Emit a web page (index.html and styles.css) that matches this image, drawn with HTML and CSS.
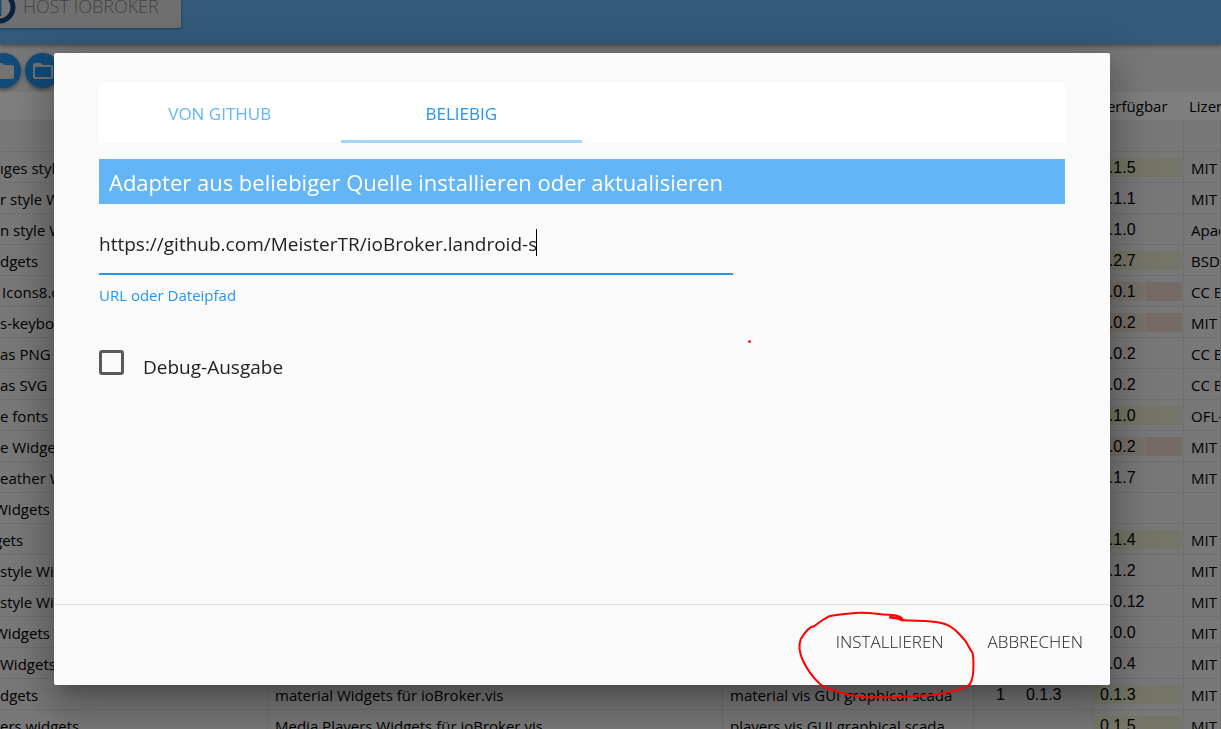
FILE: index.html
```html
<!DOCTYPE html>
<html lang="de">
<head>
<meta charset="utf-8">
<title>ioBroker – Adapter</title>
<link rel="stylesheet" href="styles.css">
</head>
<body>
<div class="page">
  <header class="topbar">
    <button class="host" type="button">
      <svg class="host-logo" viewBox="0 0 18 28" width="18" height="28" aria-hidden="true">
        <circle cx="-1" cy="7" r="14" fill="#e8eef2" stroke="#164478" stroke-width="5"/>
        <path d="M0.5 -2V16" stroke="#3f9bd0" stroke-width="2"/>
      </svg>
      <span>HOST IOBROKER</span>
    </button>
  </header>
  <div class="toolbar">
    <button class="round" type="button" aria-label="Ordner schließen">
      <svg viewBox="0 0 24 24" width="24" height="24"><path fill="#e6e6e6" d="M10 4H4c-1.100 0-2 .9-2 2v12c0 1.100.9 2 2 2h16c1.100 0 2-.9 2-2V8c0-1.100-.9-2-2-2h-8z"/></svg>
    </button>
    <button class="round" type="button" aria-label="Ordner öffnen">
      <svg viewBox="0 0 24 24" width="24" height="24"><path fill="#e6e6e6" d="M20 6h-8l-2-2H4c-1.100 0-2 .9-2 2v12c0 1.100.9 2 2 2h16c1.100 0 2-.9 2-2V8c0-1.100-.9-2-2-2zm0 12H4V8h16z"/></svg>
    </button>
  </div>
  <table class="adapters">
    <colgroup><col class="c-name"><col class="c-desc"><col class="c-keys"><col class="c-inst"><col class="c-avail"><col class="c-lic"></colgroup>
    <thead><tr><th></th><th></th><th></th><th></th><th>Verfügbar</th><th>Lizenz</th></tr></thead>
    <tbody>
      <tr class="group"><td></td><td></td><td></td><td></td><td></td><td></td></tr>
      <tr><td>ıges style</td><td></td><td></td><td></td><td class="ver new"><span>0.1.5</span></td><td>MIT</td></tr>
      <tr><td>r style W</td><td></td><td></td><td></td><td class="ver"><span>0.1.1</span></td><td>MIT</td></tr>
      <tr><td>n style W</td><td></td><td></td><td></td><td class="ver"><span>0.1.0</span></td><td>Apache</td></tr>
      <tr><td>dgets</td><td></td><td></td><td></td><td class="ver new"><span>0.2.7</span></td><td>BSD</td></tr>
      <tr><td class="cut">I Icons8.c</td><td></td><td></td><td></td><td class="ver old"><span>0.0.1</span></td><td>CC BY</td></tr>
      <tr><td>s-keyboa</td><td></td><td></td><td></td><td class="ver old"><span>0.0.2</span></td><td>MIT</td></tr>
      <tr><td>as PNG</td><td></td><td></td><td></td><td class="ver"><span>0.0.2</span></td><td>CC BY</td></tr>
      <tr><td>as SVG</td><td></td><td></td><td></td><td class="ver"><span>0.0.2</span></td><td>CC BY</td></tr>
      <tr><td>e fonts</td><td></td><td></td><td></td><td class="ver new"><span>0.1.0</span></td><td>OFL-1</td></tr>
      <tr><td>e Widget</td><td></td><td></td><td></td><td class="ver old"><span>0.0.2</span></td><td>MIT</td></tr>
      <tr><td>eather W</td><td></td><td></td><td></td><td class="ver"><span>0.1.7</span></td><td>MIT</td></tr>
      <tr><td class="cut">Widgets</td><td></td><td></td><td></td><td></td><td></td></tr>
      <tr><td class="cut">gets</td><td></td><td></td><td></td><td class="ver new"><span>0.1.4</span></td><td>MIT</td></tr>
      <tr><td>style Wi</td><td></td><td></td><td></td><td class="ver"><span>0.1.2</span></td><td>MIT</td></tr>
      <tr><td>style Wid</td><td></td><td></td><td></td><td class="ver"><span>0.0.12</span></td><td>MIT</td></tr>
      <tr><td class="cut">Widgets</td><td></td><td></td><td></td><td class="ver"><span>0.0.0</span></td><td>MIT</td></tr>
      <tr><td>Widgets</td><td></td><td></td><td></td><td class="ver"><span>0.0.4</span></td><td>MIT</td></tr>
      <tr><td>dgets</td><td>material Widgets für ioBroker.vis</td><td>material vis GUI graphical scada</td><td class="inst"><span class="count">1</span><span>0.1.3</span></td><td class="ver new"><span>0.1.3</span></td><td>MIT</td></tr>
      <tr><td>ers widgets</td><td>Media Players Widgets für ioBroker.vis</td><td>players vis GUI graphical scada</td><td></td><td class="ver new"><span>0.1.5</span></td><td>MIT</td></tr>
    </tbody>
  </table>
</div>
<div class="overlay">
  <form class="modal" role="dialog" aria-labelledby="dlg-title">
    <div class="content">
      <nav class="tabs">
        <a href="#github">VON GITHUB</a>
        <a href="#custom" class="active">BELIEBIG</a>
      </nav>
      <h2 id="dlg-title">Adapter aus beliebiger Quelle installieren oder aktualisieren</h2>
      <div class="field">
        <input id="url" type="text" spellcheck="false" value="https://github.com/MeisterTR/ioBroker.landroid-s">
        <i class="caret"></i>
        <label for="url">URL oder Dateipfad</label>
      </div>
      <div class="check">
        <input id="debug" type="checkbox">
        <label for="debug">Debug-Ausgabe</label>
      </div>
    </div>
    <footer class="actions">
      <button type="button">INSTALLIEREN</button>
      <button type="button">ABBRECHEN</button>
    </footer>
    <i class="dot"></i>
    <svg class="scribble" viewBox="0 0 531 270" width="177" height="90" aria-hidden="true">
      <path d="M317 27C310 20 300 16 285 15C270 14 262 14 245 12C220 9 195 8 175 9C155 11 120 14 96 19C75 29 63 40 53 48C37 49 22 69 11 88C5 105 8 130 17 150C28 174 42 197 67 220C82 235 95 236 115 243C135 250 160 256 185 260C225 263 270 262 325 260C370 258 400 257 430 252C465 246 492 237 512 229C525 220 528 200 529 181C530 155 530 140 526 127C515 114 512 100 504 91C493 80 480 61 460 50C445 40 430 39 417 36C385 32 350 32 317 31" fill="none" stroke="#f00" stroke-width="6" stroke-linejoin="round"/>
      <path d="M280 22C294 22 305 24 316 30" fill="none" stroke="#f00" stroke-width="8" stroke-linecap="round"/>
    </svg>
  </form>
</div>
</body>
</html>
```
FILE: styles.css
```css
* { box-sizing: border-box; }
body {
  margin: 0;
  height: 100vh;
  overflow: hidden;
  background: #f0f0f0;
  color: #000;
  font-family: "Open Sans", "Noto Sans", sans-serif;
  font-size: 15px;
}
button, input { font-family: inherit; }

.page { height: 100vh; overflow: hidden; }
.topbar {
  height: 44px;
  background: #64b5f6;
  box-shadow: 0 2px 4px rgba(0, 0, 0, .4);
}
.host {
  display: flex;
  gap: 5px;
  height: 28px;
  padding: 0 22px 0 0;
  border: 0;
  border-radius: 0 0 3px 0;
  background: #dedede;
  color: #868686;
  font-size: 18px;
  font-weight: 300;
  line-height: 12px;
  white-space: nowrap;
  box-shadow: 0 1px 3px rgba(0, 0, 0, .3);
}
.host-logo { flex: none; }
.toolbar {
  display: flex;
  align-items: center;
  gap: 4px;
  height: 48px;
  margin-left: -14px;
  padding-top: 5px;
}
.round {
  display: grid;
  place-items: center;
  width: 35px;
  height: 35px;
  padding: 0;
  border: 0;
  border-radius: 50%;
  background: #2196f3;
  box-shadow: 0 2px 4px rgba(0, 0, 0, .4);
}

.adapters {
  width: 100%;
  table-layout: fixed;
  border-collapse: separate;
  border-spacing: 0;
}
.c-name { width: 268px; }
.c-desc { width: 455px; }
.c-keys { width: 251px; }
.c-inst { width: 119px; }
.c-avail { width: 91px; }
.adapters th {
  height: 28px;
  padding: 0 5px;
  background: #fff;
  font-weight: 400;
  text-align: left;
  white-space: nowrap;
}
.adapters td {
  height: 31px;
  padding: 2px 7px 0;
  border-right: 1px solid #dedede;
  border-bottom: 1px solid #dedede;
  line-height: 20px;
  white-space: nowrap;
  overflow: hidden;
}
.adapters .group td { height: 32px; }
.adapters td:first-child { padding-left: 0; }
.adapters td.cut { text-indent: -6px; }
.adapters td.ver { padding: 0 1px; }
.ver span {
  display: block;
  padding-left: 6px;
  font: 16px/19px "Liberation Sans", sans-serif;
}
.new span { background: #e9e9cf; }
.old span { background: linear-gradient(90deg, #ecdfd5 53px, #ecd5cc 53px); }
.inst span { font: 16px/19px "Liberation Sans", sans-serif; }
.adapters td.inst { padding: 0 0 0 22px; }
.inst .count { margin-right: 21px; }

.overlay {
  position: fixed;
  inset: 0;
  display: flex;
  padding: 53px 111px 44px 54px;
  background: rgba(0, 0, 0, .5);
}
.modal {
  position: relative;
  flex: 1;
  display: flex;
  flex-direction: column;
  border-radius: 2px;
  background: #fafafa;
  box-shadow: 0 11px 15px -7px rgba(0, 0, 0, .2), 0 24px 38px 3px rgba(0, 0, 0, .14), 0 9px 46px 8px rgba(0, 0, 0, .2);
}
.content { flex: 1; padding: 30px 45px 0; }
.tabs { display: flex; height: 60px; background: #fff; }
.tabs a {
  width: 25%;
  border-bottom: 3px solid transparent;
  color: #64b5f6;
  font-size: 17px;
  font-weight: 400;
  line-height: 62px;
  text-align: center;
  text-decoration: none;
}
.tabs .active { height: 60px; border-color: #a6d5fa; color: #2196f3; }
h2 {
  margin: 16px 0 0;
  padding: 2px 10px 0;
  background: #64b5f6;
  color: #fff;
  font-size: 22px;
  font-weight: 400;
  line-height: 43px;
}
.field { position: relative; width: 66%; margin-top: 14px; padding-right: 4px; }
.field input {
  display: block;
  width: 100%;
  height: 57px;
  padding: 0 0 4px;
  border: 0;
  border-bottom: 2px solid #2196f3;
  outline: 0;
  background: none;
  color: #222;
  font-size: 19px;
}
.caret {
  position: absolute;
  left: 437px;
  top: 11px;
  width: 1px;
  height: 27px;
  background: #000;
}
.field label { display: block; color: #2196f3; font-size: 15px; line-height: 20px; margin-top: 10px; }
.check { display: flex; align-items: flex-start; gap: 19px; margin-top: 45px; }
.check input {
  appearance: none;
  width: 25px;
  height: 25px;
  margin: 0;
  border: 3px solid #5a5a5a;
  border-radius: 3px;
}
.check label { color: #222; font-size: 19px; line-height: 34px; }
.actions {
  display: flex;
  justify-content: flex-end;
  gap: 44px;
  height: 81px;
  padding: 0 27px 8px 0;
  border-top: 1px solid #e0e0e0;
}
.actions button {
  padding: 0;
  border: 0;
  background: none;
  color: #222;
  font-size: 17px;
  font-weight: 300;
}
.dot {
  position: absolute;
  left: 694px;
  top: 287px;
  width: 3px;
  height: 3px;
  border-radius: 2px;
  background: #f22;
}
.scribble { position: absolute; right: 136px; bottom: -15px; overflow: visible; }
```
